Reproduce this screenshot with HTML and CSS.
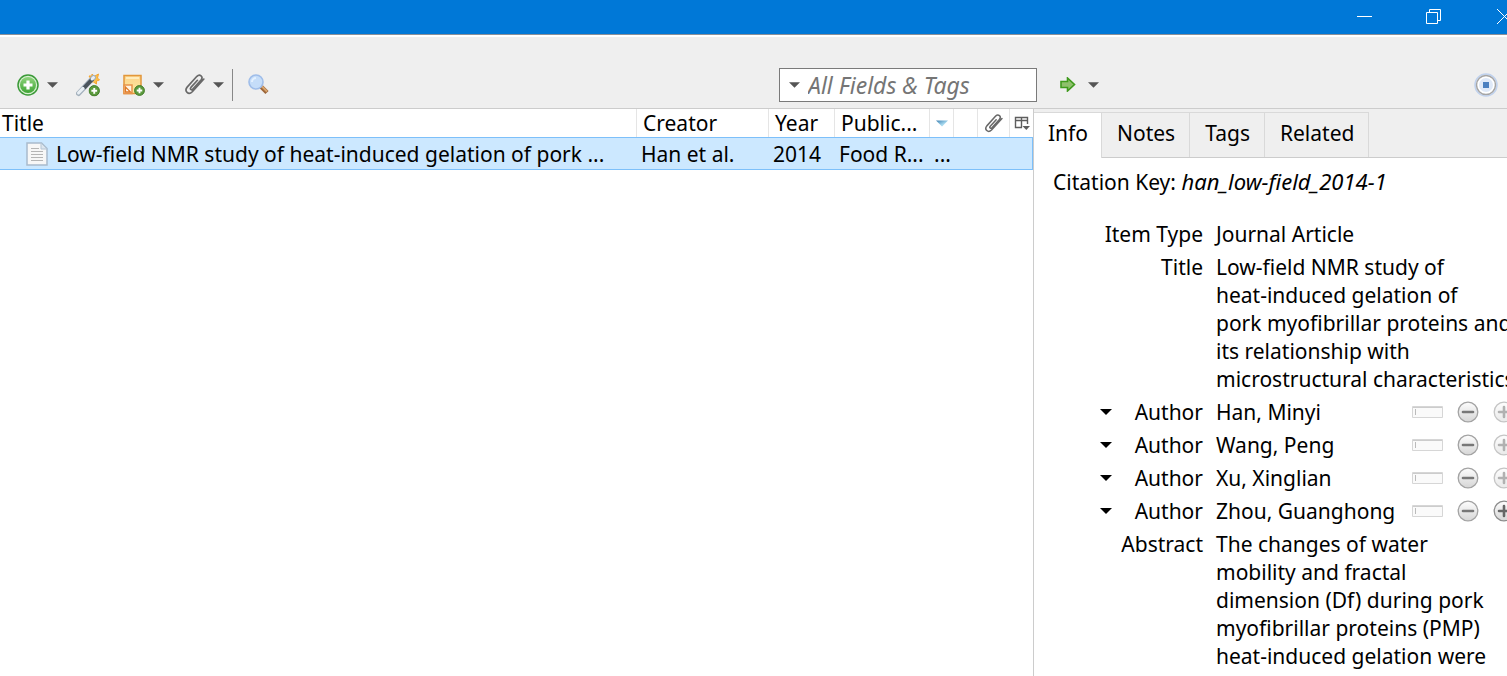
FILE: index.html
```html
<!DOCTYPE html>
<html lang="en">
<head>
<meta charset="utf-8">
<title>Library</title>
<link rel="stylesheet" href="styles.css">
</head>
<body>
<svg class="defs" aria-hidden="true">
  <defs>
    <linearGradient id="green" x1="0" y1="0" x2="0" y2="1"><stop offset="0" stop-color="#8fd47c"/><stop offset="1" stop-color="#3fa535"/></linearGradient>
    <linearGradient id="grey" x1="0" y1="0" x2="0" y2="1"><stop offset="0" stop-color="#fdfdfd"/><stop offset="1" stop-color="#d6d6d6"/></linearGradient>
    <linearGradient id="note" x1="0" y1="0" x2="0" y2="1"><stop offset="0" stop-color="#fdd38a"/><stop offset="1" stop-color="#fbe9a0"/></linearGradient>
    <linearGradient id="sort" x1="0" y1="0" x2="1" y2="1"><stop offset="0" stop-color="#3c7fb1"/><stop offset="0.6" stop-color="#a5d8ee"/></linearGradient>
    <symbol id="caret" viewBox="0 0 12 6"><path d="M0 0h12L6 6z"/></symbol>
    <symbol id="badge" viewBox="0 0 12 12"><circle cx="6" cy="6" r="5.4" fill="#5c9a3d" stroke="#3d7926"/><path d="M6 3v6M3 6h6" stroke="#fff" stroke-width="2"/></symbol>
    <symbol id="clip" viewBox="0 0 20 20"><path d="M12.800 6 6.600 12.800c-1.300 1.600.5 3 1.800 1.600l7.800-8.700c2.600-3.200-1.200-6.300-3.900-3.500L3 12.500c-3 3.700 1.200 8 4.900 4.400L18.900 4.800" fill="none" stroke="#696969" stroke-width="1.600" stroke-linecap="round" stroke-linejoin="round"/></symbol>
    <symbol id="minus" viewBox="0 0 22 22"><circle cx="11" cy="11" r="9.800" fill="url(#grey)" stroke="#a3a3a3" stroke-width="1.300"/><path d="M6 11h10" stroke="#777" stroke-width="2.600" stroke-linecap="round"/></symbol>
    <symbol id="plus" viewBox="0 0 22 22"><circle cx="11" cy="11" r="9.800" fill="url(#grey)" stroke="#8c8c8c" stroke-width="1.300"/><path d="M6 11h10M11 6v10" stroke="#666" stroke-width="2.600" stroke-linecap="round"/></symbol>
    <symbol id="field" viewBox="0 0 31 12"><path d="M.5.5h30v11H.5z" fill="#fafafa" stroke="#d6d6d6"/><path d="M1 1.500h29" stroke="#ccc"/><path d="M3.500 3v6" stroke="#bbb"/></symbol>
  </defs>
</svg>
<div class="app">
  <header class="titlebar">
    <button class="window-button" aria-label="Minimize"><svg width="15" height="15" viewBox="0 0 15 15"><path d="M0 7.500h15"/></svg></button>
    <button class="window-button" aria-label="Restore"><svg width="15" height="15" viewBox="0 0 15 15"><path d="M.5 3.500h11v11H.5zM3.500 3V.5h11v11H12"/></svg></button>
    <button class="window-button close" aria-label="Close"><svg width="15" height="15" viewBox="0 0 15 15"><path d="M0 0l15 15M15 0L0 15"/></svg></button>
  </header>
  <div class="toolbar">
    <div class="tools">
      <button class="tool" aria-label="New item">
        <svg width="22" height="22" viewBox="0 0 22 22"><circle cx="11" cy="11" r="10" fill="#d9f0d2" stroke="#3b9a38" stroke-width="1.500"/><circle cx="11" cy="11" r="8" fill="url(#green)"/><path d="M11 6.500v9M6.500 11h9" stroke="#fff" stroke-width="3.200"/></svg>
        <svg class="caret" width="11" height="6"><use href="#caret"/></svg>
      </button>
      <button class="tool wand" aria-label="Add item by identifier">
        <svg width="24" height="24" viewBox="0 0 24 24"><path d="m16 1 2 2.500L22.500 1l-1 4 2 2-3 1v3l-3-2-4 0 1.500-3-2-3h3z" fill="#fbc04a" stroke="#f6a52e"/><path d="M2.500 20.500 17.500 4.500" stroke="#a3b0bc" stroke-width="5" stroke-linecap="round"/><path d="m8 15 8.500-9" stroke="#4b545c" stroke-width="4"/><path d="m2.500 20 4.500-4.600M16 6l1.500-1.500" stroke="#e9eff4" stroke-width="3" stroke-linecap="round"/><use href="#badge" x="12.500" y="12" width="11.500" height="11.500"/></svg>
      </button>
      <button class="tool" aria-label="New note">
        <svg width="22" height="22" viewBox="0 0 22 22"><path d="M1 1.500h17v18H1z" fill="url(#note)" stroke="#e2973b" stroke-width="1.500"/><path d="M3 4h13" stroke="#fff3cd" stroke-width="1.500"/><path d="M1 11h8v8.500H1z" fill="#fff3e0" stroke="#e8944a" stroke-width="1.500"/><path d="M2.500 13v5h5z" fill="#fff" stroke="#e07a26" stroke-width="1.300"/><use href="#badge" x="11" y="11" width="11" height="11"/></svg>
        <svg class="caret" width="11" height="6"><use href="#caret"/></svg>
      </button>
      <button class="tool" aria-label="Add attachment">
        <svg width="21" height="21"><use href="#clip"/></svg>
        <svg class="caret" width="11" height="6"><use href="#caret"/></svg>
      </button>
      <span class="divider"></span>
      <button class="tool" aria-label="Advanced search">
        <svg width="21" height="21" viewBox="0 0 21 21"><path d="m13 12.500 6 6" stroke="#9c6539" stroke-width="4.500"/><path d="m13.500 12 5.500 5.500" stroke="#d7a36b" stroke-width="2"/><circle cx="8" cy="8" r="7" fill="#c5ddf9" stroke="#9fbde9" stroke-width="1.600"/><path d="M4 8a4 4 0 0 1 4-4" stroke="#e4f1ff" stroke-width="2" fill="none"/></svg>
      </button>
    </div>
    <div class="search">
      <button class="search-mode" aria-label="Search mode"><svg class="caret" width="11" height="6"><use href="#caret"/></svg></button>
      <input class="search-input" type="text" placeholder="All Fields &amp; Tags" aria-label="Search">
    </div>
    <div class="locate">
      <button class="tool" aria-label="Locate">
        <svg width="16" height="15" viewBox="0 0 16 15"><path d="M1 4.500h6.500V1L14.500 7.500 7.500 14v-3.500H1z" fill="#8fc06d" stroke="#3f9a1d" stroke-width="1.600"/></svg>
        <svg class="caret" width="11" height="6"><use href="#caret"/></svg>
      </button>
      <button class="tool" aria-label="Sync">
        <svg width="24" height="24" viewBox="0 0 24 24"><circle cx="12" cy="12" r="11" fill="#fff" stroke="#c0d2ee" stroke-width="1.500"/><circle cx="12" cy="12" r="9.500" fill="#fff" stroke="#a5a5a5" stroke-width="1.500"/><circle cx="12" cy="12" r="7" fill="#dfe9f8"/><path d="M9 9h6v6H9z" fill="#4a7fc0"/></svg>
      </button>
    </div>
  </div>
  <main class="content">
    <section class="items">
      <table class="item-table">
        <colgroup><col><col class="col-creator"><col class="col-year"><col class="col-publication"><col class="col-small"><col class="col-small"><col class="col-clip"><col class="col-picker"></colgroup>
        <thead>
          <tr>
            <th class="first">Title</th><th>Creator</th><th>Year</th><th>Public...</th>
            <th class="icon-cell"><svg width="12" height="7"><use href="#caret" fill="url(#sort)"/></svg></th>
            <th></th>
            <th class="icon-cell"><svg width="19" height="19"><use href="#clip"/></svg></th>
            <th class="icon-cell"><svg width="16" height="15" viewBox="0 0 16 15"><path d="M8 11.500H1.500v-10h12v6.500M1.500 4.500h12M7.500 1.500v10M1.500 4.500" fill="none" stroke="#5e5e5e" stroke-width="1.400"/><path d="M8.500 10H16l-3.700 4z" fill="#5e5e5e"/></svg></th>
          </tr>
        </thead>
        <tbody>
          <tr class="selected">
            <td class="first"><div class="item-title">
              <svg width="22" height="24" viewBox="0 0 22 24"><path d="M1 1h14.500L21 6.500V23H1z" fill="#f7f7f7" stroke="#a9bbcd" stroke-width="1.500"/><path d="M15 1.500V7h5.500" fill="#dde6ee" stroke="#b5c5d4"/><path d="M5 6.500h8M5 9.500h12M5 12.500h12M5 15.500h12M5 18.500h12" stroke="#b5b5b5"/></svg>
              <span>Low-field NMR study of heat-induced gelation of pork ...</span></div></td>
            <td>Han et al.</td><td>2014</td><td>Food R...</td><td>...</td><td></td><td></td><td></td>
          </tr>
        </tbody>
      </table>
    </section>
    <aside class="details">
      <nav class="tabs" role="tablist">
        <button class="tab active" role="tab" aria-selected="true">Info</button>
        <button class="tab" role="tab">Notes</button>
        <button class="tab" role="tab">Tags</button>
        <button class="tab" role="tab">Related</button>
      </nav>
      <div class="info">
        <p class="citation">Citation Key: <em>han_low-field_2014-1</em></p>
        <dl class="fields">
          <dt>Item Type</dt><dd>Journal Article</dd>
          <dt>Title</dt><dd>Low-field NMR study of<br>heat-induced gelation of<br>pork myofibrillar proteins and<br>its relationship with<br>microstructural characteristics</dd>
          <dt><button class="role" aria-label="Change creator type"><svg width="12" height="6"><use href="#caret"/></svg></button>Author</dt>
          <dd class="creator"><span>Han, Minyi</span><button aria-label="Single field"><svg width="31" height="12"><use href="#field"/></svg></button><button aria-label="Remove"><svg width="22" height="22"><use href="#minus"/></svg></button><button aria-label="Add" disabled><svg width="22" height="22"><use href="#plus"/></svg></button></dd>
          <dt><button class="role" aria-label="Change creator type"><svg width="12" height="6"><use href="#caret"/></svg></button>Author</dt>
          <dd class="creator"><span>Wang, Peng</span><button aria-label="Single field"><svg width="31" height="12"><use href="#field"/></svg></button><button aria-label="Remove"><svg width="22" height="22"><use href="#minus"/></svg></button><button aria-label="Add" disabled><svg width="22" height="22"><use href="#plus"/></svg></button></dd>
          <dt><button class="role" aria-label="Change creator type"><svg width="12" height="6"><use href="#caret"/></svg></button>Author</dt>
          <dd class="creator"><span>Xu, Xinglian</span><button aria-label="Single field"><svg width="31" height="12"><use href="#field"/></svg></button><button aria-label="Remove"><svg width="22" height="22"><use href="#minus"/></svg></button><button aria-label="Add" disabled><svg width="22" height="22"><use href="#plus"/></svg></button></dd>
          <dt><button class="role" aria-label="Change creator type"><svg width="12" height="6"><use href="#caret"/></svg></button>Author</dt>
          <dd class="creator"><span>Zhou, Guanghong</span><button aria-label="Single field"><svg width="31" height="12"><use href="#field"/></svg></button><button aria-label="Remove"><svg width="22" height="22"><use href="#minus"/></svg></button><button aria-label="Add"><svg width="22" height="22"><use href="#plus"/></svg></button></dd>
          <dt>Abstract</dt><dd>The changes of water<br>mobility and fractal<br>dimension (Df) during pork<br>myofibrillar proteins (PMP)<br>heat-induced gelation were<br>investigated using low-field</dd>
        </dl>
      </div>
    </aside>
  </main>
</div>
</body>
</html>
```
FILE: styles.css
```css
* { box-sizing: border-box; }

body {
  margin: 0;
  overflow: hidden;
  background: #fff;
  color: #000;
  font: 21px/28px "Noto Sans", "Open Sans", sans-serif;
}

button {
  display: flex;
  align-items: center;
  padding: 0;
  border: 0;
  background: none;
  color: inherit;
  font: inherit;
}

svg { display: block; flex: none; }
.defs { position: absolute; width: 0; height: 0; }
.app { display: flex; flex-direction: column; height: 100vh; }

.titlebar {
  display: flex;
  flex: none;
  justify-content: flex-end;
  height: 35px;
  margin-right: -30px;
  border-bottom: 1px solid #8a9099;
  background: #0078d7;
}
.window-button { justify-content: center; width: 69px; height: 32px; }
.window-button.close { padding-left: 4px; }
.window-button path { fill: none; stroke: #fff; }

.toolbar {
  display: flex;
  flex: none;
  align-items: center;
  height: 74px;
  padding: 24px 9px 0 17px;
  border-top: 2px solid #fff;
  border-bottom: 1px solid #ccc;
  background: #efefef;
}
.tools { display: flex; flex: 1; align-items: center; }
.tool { gap: 8px; margin-right: 20px; }
.tool.wand { margin-left: -2px; margin-right: 23px; }
.caret { fill: #555; }
.divider { width: 1px; height: 32px; margin: 0 15px 0 -12px; background: #888; }

.search {
  display: flex;
  align-items: center;
  width: 258px;
  height: 34px;
  border: 1px solid #7a7a7a;
  background: #fff;
}
.search-mode { padding: 0 8px 0 9px; }
.search-input {
  flex: 1;
  min-width: 0;
  height: 32px;
  padding: 0;
  border: 0;
  outline: 0;
  background: none;
  font: italic 23px/32px "Noto Sans", "Open Sans", sans-serif;
}
.search-input::placeholder { color: #757575; opacity: 1; }

.locate {
  display: flex;
  align-items: center;
  justify-content: space-between;
  width: 461px;
  padding-left: 23px;
}
.locate .tool { gap: 12px; margin-right: 0; }

.content { display: flex; flex: 1; min-height: 0; }
.items { flex: 1; min-width: 0; overflow: hidden; }

.item-table { width: 100%; table-layout: fixed; border-collapse: separate; border-spacing: 0; }
.col-creator { width: 132px; }
.col-year { width: 66px; }
.col-publication { width: 95px; }
.col-small { width: 24px; }
.col-clip { width: 32px; }
.col-picker { width: 23px; }
.item-table th {
  height: 28px;
  padding: 0 0 0 6px;
  border-right: 1px solid #e5e5e5;
  font-weight: normal;
  text-align: left;
  white-space: nowrap;
}
.item-table th.first { padding-left: 2px; }
.item-table th.icon-cell { padding: 0; }
.item-table .icon-cell svg { margin: 0 auto; }
.item-table th:last-child { border-right: 0; }
.item-table td {
  height: 33px;
  padding: 0 0 0 4px;
  border-top: 1px solid #7dc0fa;
  border-bottom: 1px solid #7dc0fa;
  white-space: nowrap;
}
.item-table td:last-child { border-right: 1px solid #7dc0fa; }
.selected { background: #cce8ff; }
.item-table td.first { padding-left: 26px; overflow: hidden; }
.item-title { display: flex; align-items: center; gap: 8px; }

.details {
  flex: 0 0 474px;
  overflow: hidden;
  border-left: 1px solid #ccc;
}
.tabs {
  display: flex;
  height: 49px;
  padding-top: 3px;
  border-bottom: 1px solid #ccc;
  background: #efefef;
}
.tab {
  height: 45px;
  padding: 0 14px 4px 15px;
  border-top: 1px solid #d9d9d9;
  border-right: 1px solid #d9d9d9;
}
.tab.active { height: 46px; padding: 0 13px 6px 14px; background: #fff; }

.info { padding: 10px 0 0 19px; white-space: nowrap; }
.citation { margin: 0; }
.citation em { font-size: 22px; line-height: 1; }
.fields {
  display: grid;
  grid-template-columns: 150px 1fr;
  gap: 5px 13px;
  margin: 24px -8px 0 0;
}
.fields dt { display: flex; align-items: flex-start; justify-content: flex-end; }
.fields dd { margin: 0; min-width: 0; }
.role { height: 28px; margin-right: 23px; }
.creator { display: flex; align-items: center; gap: 14px; }
.creator span { flex: 1; }
.creator button:disabled { opacity: 0.5; }
```
